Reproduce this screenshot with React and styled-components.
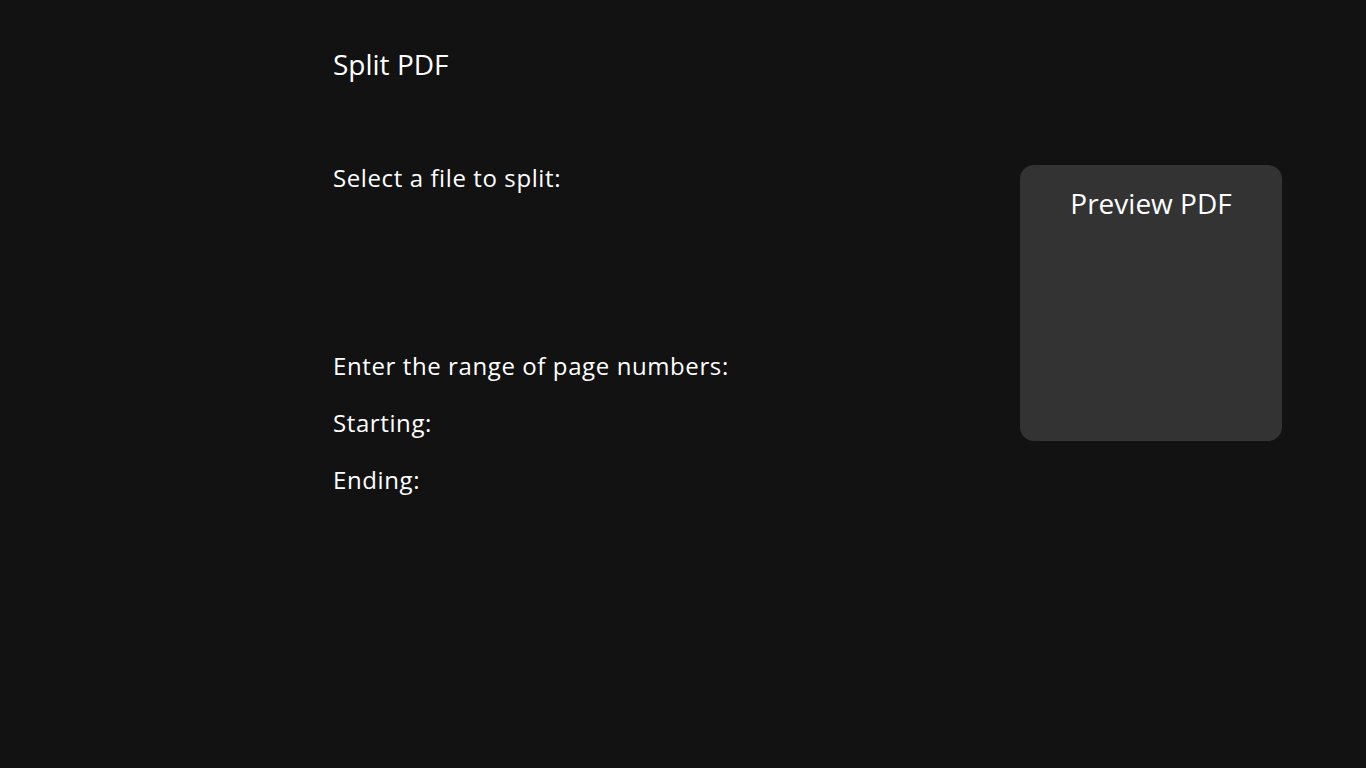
import React from 'react';
import styled, { createGlobalStyle } from 'styled-components';

const GlobalStyle = createGlobalStyle`
    html, body {
        margin: 0;
        padding: 0;
        background-color: #121212;
        color: #fff;
        font-family: "Open Sans", "Liberation Sans", sans-serif;
    }
`;

const Page = styled.div`
    min-height: 768px;
    box-sizing: border-box;
    padding: 40px 84px 0 333px;
    display: flex;
    flex-direction: column;
`;

const Title = styled.h1`
    margin: 0;
    font-size: 28px;
    font-weight: 400;
    line-height: 48px;
`;

const Body = styled.div`
    display: flex;
    justify-content: space-between;
    align-items: flex-start;
    margin-top: 73px;
`;

const Form = styled.div`
    display: flex;
    flex-direction: column;
`;

const Label = styled.p`
    margin: 0 0 ${(props) => props.gap || 23}px;
    font-size: 24px;
    letter-spacing: 0.6px;
    line-height: 34px;
    font-weight: 400;
`;

const Preview = styled.div`
    width: 262px;
    height: 276px;
    background-color: #333;
    border-radius: 14px;
    margin-top: 4px;
    display: flex;
    justify-content: center;
    padding-top: 18px;
    box-sizing: border-box;
`;

const PreviewTitle = styled.h2`
    margin: 0;
    font-size: 28px;
    font-weight: 400;
    line-height: 40px;
`;

function App() {
    return (
        <>
            <GlobalStyle />
            <Page>
                <Title>Split PDF</Title>
                <Body>
                    <Form>
                        <Label gap={154}>Select a file to split:</Label>
                        <Label>Enter the range of page numbers:</Label>
                        <Label>Starting:</Label>
                        <Label>Ending:</Label>
                    </Form>
                    <Preview>
                        <PreviewTitle>Preview PDF</PreviewTitle>
                    </Preview>
                </Body>
            </Page>
        </>
    );
}

export default App;
